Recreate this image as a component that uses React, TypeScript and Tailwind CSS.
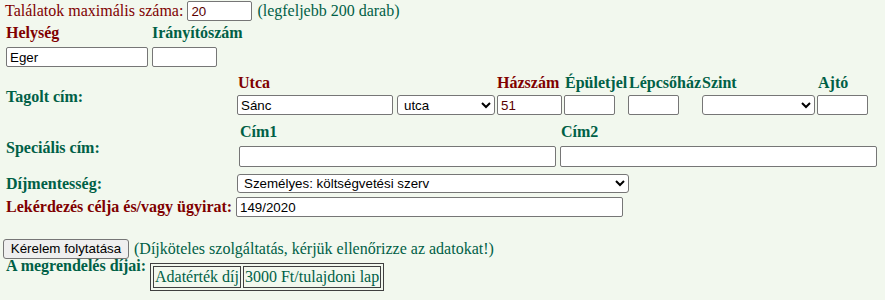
import React from 'react';

const inp =
  "block box-border bg-white border border-[#767676] rounded-[2px] px-[3px] font-['Liberation_Sans',Arial,sans-serif] text-[13.33px] text-black outline-none";
const sel =
  "block box-border bg-white border border-[#767676] rounded-[3px] pl-[2px] font-['Liberation_Sans',Arial,sans-serif] text-[13.33px] text-black outline-none";
const b = "whitespace-nowrap font-['Liberation_Serif','Times_New_Roman',serif] font-bold";
const green = 'text-[#006046]';
const red = 'text-[#800000]';

const App = () => {
  return (
    <div className="min-h-[300px] w-full bg-[#f2f8ee] font-['Liberation_Serif','Times_New_Roman',serif] text-[16px] leading-[18px] text-[#800000]">
      {/* Találatok */}
      <div className="flex items-center pl-[5px] pt-[1px]">
        <span className="whitespace-nowrap">Találatok maximális száma:</span>
        <input className={`${inp} ml-[4px] h-[20px] w-[65px] !text-[#5a0000]`} defaultValue="20" readOnly />
        <span className={`ml-[5px] whitespace-nowrap ${green}`}>(legfeljebb 200 darab)</span>
      </div>

      {/* Helység */}
      <div className="mt-[3px] ml-[6px] grid grid-cols-[146px_65px]">
        <span className={`${b} ${red}`}>Helység</span>
        <span className={`${b} ${green}`}>Irányítószám</span>
        <input className={`${inp} mt-[5px] h-[20px] w-[142px]`} defaultValue="Eger" readOnly />
        <input className={`${inp} mt-[5px] h-[20px] w-[65px]`} defaultValue="" readOnly />
      </div>

      {/* Tagolt cím */}
      <div className="mt-[7px] ml-[6px] flex items-center">
        <span className={`w-[231px] pt-[4px] ${b} ${green}`}>Tagolt cím:</span>
        <div className="grid grid-cols-[160px_100px_67px_64px_74px_115px_52px]">
          <span className={`pl-[1px] ${b} ${red}`}>Utca</span>
          <span />
          <span className={`${b} ${red}`}>Házszám</span>
          <span className={`pl-[1px] ${b} ${green}`}>Épületjel</span>
          <span className={`pl-[1px] ${b} ${green}`}>Lépcsőház</span>
          <span className={`${b} ${green}`}>Szint</span>
          <span className={`pl-[1px] ${b} ${green}`}>Ajtó</span>

          <input className={`${inp} mt-[3px] h-[20px] w-[156px]`} defaultValue="Sánc" readOnly />
          <select className={`${sel} mt-[3px] h-[20px] w-[98px]`} defaultValue="utca">
            <option value="utca">utca</option>
            <option value="út">út</option>
            <option value="tér">tér</option>
          </select>
          <input className={`${inp} mt-[3px] h-[20px] w-[65px] !text-[#5a0000]`} defaultValue="51" readOnly />
          <input className={`${inp} mt-[3px] h-[20px] w-[51px]`} defaultValue="" readOnly />
          <input className={`${inp} mt-[3px] h-[20px] w-[51px]`} defaultValue="" readOnly />
          <select className={`${sel} mt-[3px] h-[20px] w-[113px]`} defaultValue="">
            <option value=""></option>
            <option value="1">1</option>
          </select>
          <input className={`${inp} mt-[3px] h-[20px] w-[51px]`} defaultValue="" readOnly />
        </div>
      </div>

      {/* Speciális cím */}
      <div className="mt-[8px] ml-[6px] flex items-center">
        <span className={`w-[233px] pt-[5px] ${b} ${green}`}>Speciális cím:</span>
        <div className="grid grid-cols-[321px_317px]">
          <span className={`pl-[1px] ${b} ${green}`}>Cím1</span>
          <span className={`pl-[1px] ${b} ${green}`}>Cím2</span>
          <input className={`${inp} mt-[5px] h-[21px] w-[317px]`} defaultValue="" readOnly />
          <input className={`${inp} mt-[5px] h-[21px] w-[317px]`} defaultValue="" readOnly />
        </div>
      </div>

      {/* Díjmentesség */}
      <div className="mt-[7px] ml-[6px] flex items-center">
        <span className={`w-[231px] ${b} ${green}`}>Díjmentesség:</span>
        <select className={`${sel} h-[19px] w-[392px]`} defaultValue="ksz">
          <option value="ksz">Személyes: költségvetési szerv</option>
          <option value="nincs">Nincs</option>
        </select>
      </div>

      {/* Lekérdezés célja */}
      <div className="mt-[4px] ml-[6px] flex items-center">
        <span className={`w-[230px] ${b} ${red}`}>Lekérdezés célja és/vagy ügyirat:</span>
        <input className={`${inp} h-[20px] w-[387px]`} defaultValue="149/2020" readOnly />
      </div>

      {/* Gomb */}
      <div className="mt-[22px] ml-[3px] flex items-center">
        <button className="h-[20px] w-[126px] rounded-[3px] border border-[#767676] bg-[#efefef] px-[6px] font-['Liberation_Sans',Arial,sans-serif] text-[13.33px] text-black">
          Kérelem folytatása
        </button>
        <span className={`ml-[5px] whitespace-nowrap ${green}`}>
          (Díjköteles szolgáltatás, kérjük ellenőrizze az adatokat!)
        </span>
      </div>

      {/* Díjak */}
      <div className="mt-[-2px] ml-[6px] flex items-start">
        <span className={`w-[144px] ${b} ${green}`}>A megrendelés díjai:</span>
        <table className={`mt-[6px] border-separate border-spacing-[2px] border border-[#404040] ${green}`}>
          <tbody>
            <tr>
              <td className="border border-[#404040] p-[1px] whitespace-nowrap">Adatérték díj</td>
              <td className="border border-[#404040] p-[1px] whitespace-nowrap">3000 Ft/tulajdoni lap</td>
            </tr>
          </tbody>
        </table>
      </div>
    </div>
  );
};

export default App;
